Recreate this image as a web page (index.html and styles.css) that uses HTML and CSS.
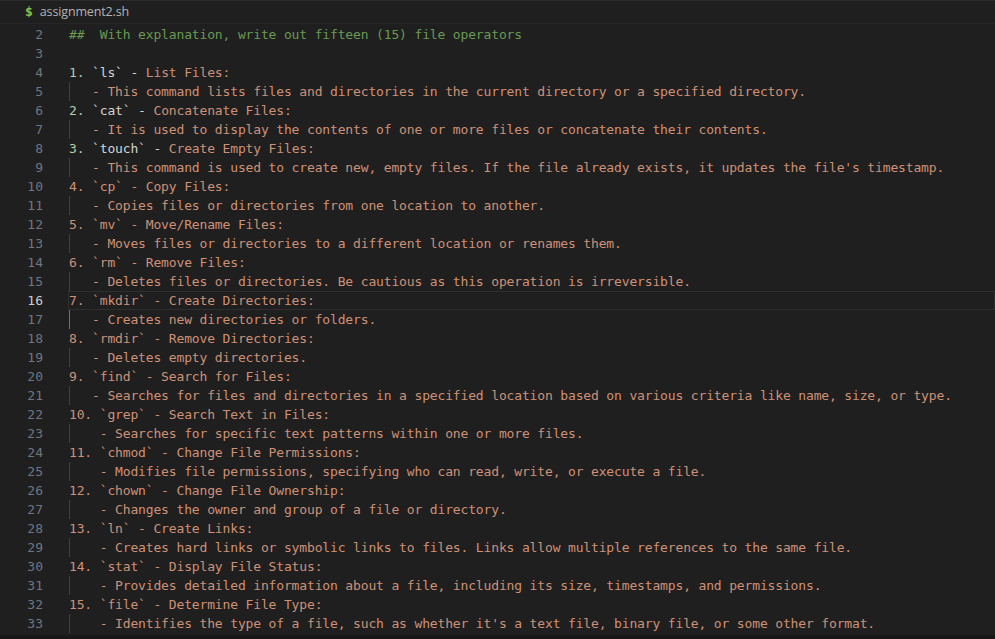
FILE: index.html
```html
<!DOCTYPE html>
<html>
<head>
<meta charset="utf-8">
<link rel="stylesheet" href="styles.css">
</head>
<body>
<div class="window">
  <div class="breadcrumb">
    <span class="shicon">$</span>
    <span class="fname">assignment2.sh</span>
  </div>
  <div class="editor">
    <div class="row"><span class="ln">2</span><span class="code"><span class="c">##  With explanation, write out fifteen (15) file operators</span></span></div>
    <div class="row"><span class="ln">3</span><span class="code"></span></div>
    <div class="row"><span class="ln">4</span><span class="code"><span class="n">1.</span><span class="d"> `ls` - </span><span class="s">List Files:</span></span></div>
    <div class="row"><span class="ln">5</span><span class="code g s">   - This command lists files and directories in the current directory or a specified directory.</span></div>
    <div class="row"><span class="ln">6</span><span class="code"><span class="n">2.</span><span class="d"> `cat` - </span><span class="s">Concatenate Files:</span></span></div>
    <div class="row"><span class="ln">7</span><span class="code g s">   - It is used to display the contents of one or more files or concatenate their contents.</span></div>
    <div class="row"><span class="ln">8</span><span class="code"><span class="n">3.</span><span class="d"> `touch` - </span><span class="s">Create Empty Files:</span></span></div>
    <div class="row"><span class="ln">9</span><span class="code g s">   - This command is used to create new, empty files. If the file already exists, it updates the file's timestamp.</span></div>
    <div class="row"><span class="ln">10</span><span class="code s">4. `cp` - Copy Files:</span></div>
    <div class="row"><span class="ln">11</span><span class="code g s">   - Copies files or directories from one location to another.</span></div>
    <div class="row"><span class="ln">12</span><span class="code s">5. `mv` - Move/Rename Files:</span></div>
    <div class="row"><span class="ln">13</span><span class="code g s">   - Moves files or directories to a different location or renames them.</span></div>
    <div class="row"><span class="ln">14</span><span class="code s">6. `rm` - Remove Files:</span></div>
    <div class="row"><span class="ln">15</span><span class="code g s">   - Deletes files or directories. Be cautious as this operation is irreversible.</span></div>
    <div class="row active"><span class="ln">16</span><span class="code s">7. `mkdir` - Create Directories:</span></div>
    <div class="row"><span class="ln">17</span><span class="code g ga s">   - Creates new directories or folders.</span></div>
    <div class="row"><span class="ln">18</span><span class="code s">8. `rmdir` - Remove Directories:</span></div>
    <div class="row"><span class="ln">19</span><span class="code g s">   - Deletes empty directories.</span></div>
    <div class="row"><span class="ln">20</span><span class="code s">9. `find` - Search for Files:</span></div>
    <div class="row"><span class="ln">21</span><span class="code g s">   - Searches for files and directories in a specified location based on various criteria like name, size, or type.</span></div>
    <div class="row"><span class="ln">22</span><span class="code s">10. `grep` - Search Text in Files:</span></div>
    <div class="row"><span class="ln">23</span><span class="code g s">    - Searches for specific text patterns within one or more files.</span></div>
    <div class="row"><span class="ln">24</span><span class="code s">11. `chmod` - Change File Permissions:</span></div>
    <div class="row"><span class="ln">25</span><span class="code g s">    - Modifies file permissions, specifying who can read, write, or execute a file.</span></div>
    <div class="row"><span class="ln">26</span><span class="code s">12. `chown` - Change File Ownership:</span></div>
    <div class="row"><span class="ln">27</span><span class="code g s">    - Changes the owner and group of a file or directory.</span></div>
    <div class="row"><span class="ln">28</span><span class="code s">13. `ln` - Create Links:</span></div>
    <div class="row"><span class="ln">29</span><span class="code g s">    - Creates hard links or symbolic links to files. Links allow multiple references to the same file.</span></div>
    <div class="row"><span class="ln">30</span><span class="code s">14. `stat` - Display File Status:</span></div>
    <div class="row"><span class="ln">31</span><span class="code g s">    - Provides detailed information about a file, including its size, timestamps, and permissions.</span></div>
    <div class="row"><span class="ln">32</span><span class="code s">15. `file` - Determine File Type:</span></div>
    <div class="row"><span class="ln">33</span><span class="code g s">    - Identifies the type of a file, such as whether it's a text file, binary file, or some other format.</span></div>
  </div>
  <div class="hscroll"></div>
</div>
</body>
</html>
```

FILE: styles.css
```css
html, body {
  margin: 0;
  padding: 0;
  background: #1f1f1f;
}

.window {
  width: 995px;
  height: 639px;
  display: flex;
  flex-direction: column;
  overflow: hidden;
  background: #1f1f1f;
  border-top: 1px solid #2b2b2b;
  box-sizing: border-box;
}

.breadcrumb {
  height: 23px;
  display: flex;
  align-items: center;
  gap: 7px;
  padding-left: 25px;
  padding-bottom: 1px;
  box-sizing: border-box;
  border-bottom: 1px solid #262626;
  flex: none;
}

.shicon {
  font-family: "DejaVu Sans Mono", monospace;
  font-weight: bold;
  font-size: 13px;
  color: #8dc149;
}

.fname {
  font-family: "Open Sans", "Noto Sans", sans-serif;
  font-size: 12.5px;
  color: #b4b4b4;
  letter-spacing: -0.15px;
}

.editor {
  flex: 1;
  display: flex;
  flex-direction: column;
  padding-top: 1px;
  font-family: "DejaVu Sans Mono", "Liberation Mono", monospace;
  font-size: 13px;
  letter-spacing: -0.15px;
  overflow: hidden;
}

.row {
  display: flex;
  height: 19px;
  line-height: 19px;
  flex: none;
}

.ln {
  width: 43px;
  text-align: right;
  color: #6e7681;
  flex: none;
  letter-spacing: 0;
}

.code {
  margin-left: 26px;
  flex: 1;
  white-space: pre;
  color: #cccccc;
}

.row.active .ln {
  color: #cccccc;
}

.row.active .code {
  margin-left: 25px;
  padding-left: 1px;
  box-shadow: inset 0 0 0 1px #2e2e2e;
}

.g {
  background-image: linear-gradient(#404040, #404040);
  background-repeat: no-repeat;
  background-size: 1px 100%;
  background-position: 0 0;
}

.ga {
  background-image: linear-gradient(#707070, #707070);
}

.c { color: #6a9955; }
.n { color: #b5cea8; }
.d { color: #d4d4d4; }
.s { color: #ce9178; }

.hscroll {
  height: 4px;
  flex: none;
  background: #181818;
}
```
